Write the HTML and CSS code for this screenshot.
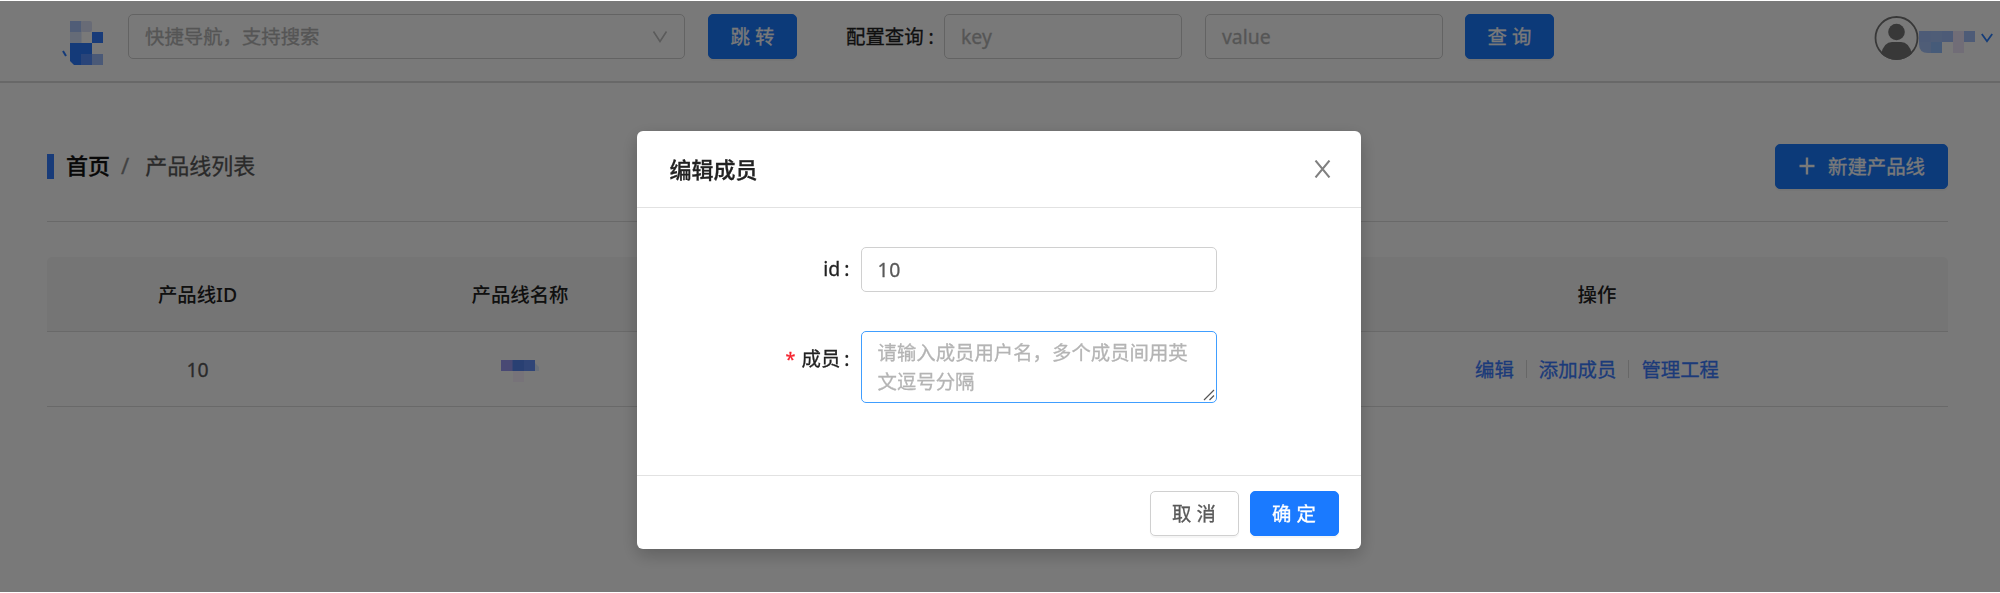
FILE: index.html
```html
<!DOCTYPE html>
<html lang="zh-CN">
<head>
<meta charset="utf-8">
<title>产品线列表</title>
<link rel="stylesheet" href="styles.css">
</head>
<body>
<header class="topbar">
  <svg class="logo" width="44" height="46" viewBox="0 0 44 46">
    <path d="M2 31l3 5" stroke="#2a7aff" stroke-width="2"/>
    <rect x="9" y="1" width="11.500" height="11" fill="#a8c4fa"/>
    <rect x="20" y="1" width="11" height="11" rx="2" fill="#dce2f8"/>
    <rect x="9" y="12" width="11.500" height="11" fill="#d6e2fa"/>
    <rect x="31" y="12" width="11" height="11" fill="#347dff"/>
    <path d="M9 23h22v22H13l-4-4z" fill="#2b7aff"/>
    <rect x="20" y="34" width="11.500" height="11" fill="#5890ff"/>
    <rect x="31" y="34" width="11" height="11" fill="#9cbcfa"/>
  </svg>
  <div class="field nav-select"><span>快捷导航，支持搜索</span>
    <svg width="16" height="14" viewBox="0 0 16 14"><path d="M1.500 1.500L8 11.500l6.500-10" fill="none" stroke="#bfbfbf" stroke-width="1.600"/></svg>
  </div>
  <button class="btn primary spaced jump">跳转</button>
  <span class="query-label">配置查询<i class="colon">:</i></span>
  <div class="field query">key</div>
  <div class="field query second">value</div>
  <button class="btn primary spaced search">查询</button>
  <div class="user">
    <svg width="45" height="46" viewBox="0 0 45 46">
      <defs><clipPath id="ring"><circle cx="22.500" cy="23" r="22"/></clipPath></defs>
      <circle cx="22.500" cy="23" r="21" fill="none" stroke="#777" stroke-width="1.800"/>
      <circle cx="22.500" cy="17" r="8.300" fill="#777"/>
      <path clip-path="url(#ring)" d="M7 39Q10 27 18 27h9q8 0 11 12v7H7z" fill="#777"/>
    </svg>
    <svg class="name" width="57" height="24" viewBox="0 0 57 24">
      <path d="M0 1h23v22H9q-9 0-9-9z" fill="#a6c5fb"/>
      <path d="M0 1h11.500v11H0zM23 1h11v11H23zM45 1h11v11H45z" fill="#a2c0fa"/>
      <path d="M12 12h11v11H12z" fill="#94c0ff"/>
      <path d="M34 1h11v22H34z" fill="#eee6fa"/>
    </svg>
    <svg class="caret" width="12" height="10" viewBox="0 0 12 10"><path d="M.8 1l5.200 7.200L11.200 1" fill="none" stroke="#2b7fff" stroke-width="1.800"/></svg>
  </div>
</header>

<main class="page">
  <div class="page-head">
    <div class="crumbs"><b class="home">首页</b><span class="slash">/</span><span>产品线列表</span></div>
    <button class="btn primary create">
      <svg width="16" height="18" viewBox="0 0 16 18"><path d="M8 .5v17M.5 9h15" stroke="#fff" stroke-width="2.400"/></svg>新建产品线</button>
  </div>
  <div class="table">
    <div class="row head"><div>产品线ID</div><div>产品线名称</div><div></div><div>操作</div></div>
    <div class="row">
      <div>10</div>
      <div><svg class="masked" width="38" height="24" viewBox="0 0 38 24">
        <path d="M0 0h12v11H0z" fill="#9b9bf5"/><path d="M11.500 0h12v11h-12z" fill="#5888f3"/><path d="M23 0h11v11H23z" fill="#6592fa"/><path d="M34 3l4 4v4h-4z" fill="#e0edff"/><path d="M12 11h11v11H12z" fill="#faf3ff"/>
      </svg></div>
      <div></div>
      <div class="ops"><a>编辑</a><i></i><a>添加成员</a><i></i><a>管理工程</a></div>
    </div>
  </div>
</main>

<div class="mask">
  <section class="modal">
    <div class="modal-head"><h2>编辑成员</h2>
      <svg width="17" height="18" viewBox="0 0 17 18"><path d="M1.500 .5l14 17M15.500 .5l-14 17" stroke="#808080" stroke-width="2"/></svg>
    </div>
    <div class="modal-body">
      <div class="form-row"><label>id<i class="colon">:</i></label><div class="field id-field">10</div></div>
      <div class="form-row members"><label><em>*</em>成员<i class="colon">:</i></label>
        <div class="area">请输入成员用户名，多个成员间用英文逗号分隔
          <svg class="grip" width="12" height="12" viewBox="0 0 12 12"><path d="M1 11L11 1M6.500 11L11 6.500" stroke="#555" stroke-width="1.200"/></svg>
        </div>
      </div>
    </div>
    <div class="modal-foot"><button class="btn spaced">取消</button><button class="btn primary spaced">确定</button></div>
  </section>
</div>
</body>
</html>
```
FILE: styles.css
```css
* { box-sizing: border-box; }
body {
  margin: 0;
  height: 593px;
  overflow: hidden;
  background: #fff;
  color: #595959;
  font: 19.4px/29px "Noto Sans", "Noto Sans CJK SC", sans-serif;
  -webkit-text-stroke: .3px currentColor;
}
svg { display: block; flex: none; }
i, em { font-style: normal; }

.btn {
  display: flex;
  align-items: center;
  justify-content: center;
  flex: none;
  width: 89px;
  height: 45px;
  padding: 0;
  border: 1px solid #d0d0d0;
  border-radius: 5px;
  background: #fff;
  color: #595959;
  font: inherit;
  box-shadow: 0 2px 1px rgba(0, 0, 0, .04);
}
.btn.primary { background: #1a7aff; border-color: #1a7aff; color: #fff; }
.btn.spaced { letter-spacing: 5px; padding-left: 5px; }

.field {
  display: flex;
  align-items: center;
  flex: none;
  height: 45px;
  padding: 0 16px;
  border: 1.5px solid #d0d0d0;
  border-radius: 5px;
  background: #fff;
  color: #b4b4b4;
}
.colon { margin-left: 5px; }

.topbar {
  display: flex;
  align-items: center;
  height: 83px;
  padding: 0 7px 8px 61px;
  border-bottom: 2px solid #dcdcdc;
}
.logo { margin: 13px 0 0; }
.nav-select { width: 557px; margin-left: 23px; justify-content: space-between; }
.jump { margin-left: 23px; }
.query-label { width: 98px; margin-left: 49px; color: #222; white-space: nowrap; }
.query { width: 238px; }
.second { margin-left: 23px; }
.search { margin-left: 22px; }
.user { display: flex; align-items: center; margin-left: auto; padding-top: 3px; }
.name { margin-top: 7px; }
.caret { margin: 0 0 0 5px; }

.page { padding: 0 52px 0 47px; }
.page-head {
  display: flex;
  justify-content: space-between;
  align-items: center;
  height: 139px;
  padding-top: 28px;
  border-bottom: 1px solid #dedede;
}
.crumbs { display: flex; align-items: center; height: 25px; border-left: 7px solid #347dff; font-size: 22px; padding: 0 0 1px 12px; }
.home { font-weight: 500; color: #111; }
.slash { margin: 0 16px 0 11px; color: #8c8c8c; }
.create { width: 173px; padding-left: 1px; }
.create svg { margin: 0 13px 0 0; }

.table { margin-top: 35px; }
.row {
  display: grid;
  grid-template-columns: 301px 344px 1fr 702px;
  align-items: center;
  justify-items: center;
  height: 75px;
  border-bottom: 1px solid #dedede;
}
.row.head { background: #f7f7f7; color: #222; font-weight: 500; border-radius: 5px 5px 0 0; -webkit-text-stroke: 0; }
.masked { margin-top: 5px; }
.ops { display: flex; align-items: center; color: #3a7bff; }
.ops i { width: 1px; height: 18px; margin: 0 12px; background: #d9d9d9; }

.mask {
  position: fixed;
  inset: 1px 0;
  padding-top: 130px;
  background: rgba(0, 0, 0, .525);
}
.modal {
  display: flex;
  flex-direction: column;
  width: 724px;
  height: 418px;
  margin-left: 636.5px;
  border-radius: 6px;
  background: #fff;
  box-shadow: 0 6px 18px rgba(0, 0, 0, .22);
}
.modal-head {
  display: flex;
  justify-content: space-between;
  align-items: center;
  height: 77px;
  padding: 0 30px 0 33px;
  border-bottom: 1px solid #e2e2e2;
}
.modal-head h2 { margin: 0; font-size: 22px; font-weight: 500; color: #222; }
.modal-body { flex: 1; padding-top: 39px; }
.form-row { display: flex; margin-bottom: 39px; }
.form-row label { width: 213px; margin-right: 11px; padding-top: 7px; text-align: right; color: #222; }
.form-row.members label { padding-top: 13px; }
.form-row .colon { margin-left: 4px; }
.form-row label em { margin-right: 6px; color: #f5222d; font-size: 18px; }
.id-field { width: 356px; color: #595959; letter-spacing: .6px; }
.area {
  position: relative;
  width: 356px;
  height: 72px;
  padding: 6px 16px;
  border: 1.5px solid #409eff;
  border-radius: 5px;
  color: #b4b4b4;
}
.grip { position: absolute; right: 1px; bottom: 1px; }
.modal-foot {
  display: flex;
  justify-content: flex-end;
  gap: 11px;
  height: 74px;
  padding: 15px 22px;
  border-top: 1px solid #e2e2e2;
}
```
